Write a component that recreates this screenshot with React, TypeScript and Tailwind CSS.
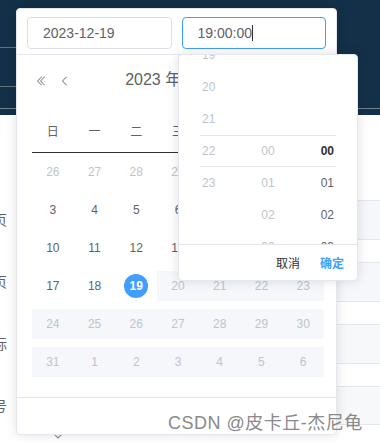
import React from "react";

type Cell = { n: number; kind: "prev" | "normal" | "sel" | "dis" };

const rows: Cell[][] = [
  [
    { n: 26, kind: "prev" },
    { n: 27, kind: "prev" },
    { n: 28, kind: "prev" },
    { n: 29, kind: "prev" },
    { n: 30, kind: "prev" },
    { n: 1, kind: "normal" },
    { n: 2, kind: "normal" },
  ],
  [3, 4, 5, 6, 7, 8, 9].map((n) => ({ n, kind: "normal" as const })),
  [10, 11, 12, 13, 14, 15, 16].map((n) => ({ n, kind: "normal" as const })),
  [
    { n: 17, kind: "normal" },
    { n: 18, kind: "normal" },
    { n: 19, kind: "sel" },
    { n: 20, kind: "dis" },
    { n: 21, kind: "dis" },
    { n: 22, kind: "dis" },
    { n: 23, kind: "dis" },
  ],
  [24, 25, 26, 27, 28, 29, 30].map((n) => ({ n, kind: "dis" as const })),
  [31, 1, 2, 3, 4, 5, 6].map((n) => ({ n, kind: "dis" as const })),
];

const weekdays = ["日", "一", "二", "三", "四", "五", "六"];

function DArrowLeft() {
  return (
    <svg viewBox="0 0 1024 1024" className="w-[12px] h-[12px]" fill="#606266">
      <path d="M529.408 149.376a29.12 29.12 0 0 1 41.728 0 30.592 30.592 0 0 1 0 42.688L259.264 511.936l311.872 319.936a30.592 30.592 0 0 1-.512 43.264 29.12 29.12 0 0 1-41.216-.512L197.76 534.272a32 32 0 0 1 0-44.672l331.648-340.224zm256 0a29.12 29.12 0 0 1 41.728 0 30.592 30.592 0 0 1 0 42.688L515.264 511.936l311.872 319.936a30.592 30.592 0 0 1-.512 43.264 29.12 29.12 0 0 1-41.216-.512L453.76 534.272a32 32 0 0 1 0-44.672l331.648-340.224z" />
    </svg>
  );
}

function ArrowLeft() {
  return (
    <svg viewBox="0 0 1024 1024" className="w-[12px] h-[12px]" fill="#606266">
      <path d="M609.408 149.376 277.76 489.6a32 32 0 0 0 0 44.672l331.648 340.352a29.12 29.12 0 0 0 41.728 0 30.592 30.592 0 0 0 0-42.752L339.264 511.936l311.872-319.872a30.592 30.592 0 0 0 0-42.688 29.12 29.12 0 0 0-41.728 0z" />
    </svg>
  );
}

function DateCell({ c }: { c: Cell }) {
  if (c.kind === "sel") {
    return (
      <div className="h-[38px] py-[4px]">
        <div className="h-[30px] flex items-center justify-center">
          <span className="w-[24px] h-[24px] rounded-full bg-[#409eff] text-white font-bold text-[12px] flex items-center justify-center">
            {c.n}
          </span>
        </div>
      </div>
    );
  }
  if (c.kind === "dis") {
    return (
      <div className="h-[38px] py-[4px]">
        <div className="h-[30px] bg-[#f5f7fa] flex items-center justify-center text-[12px] text-[#c0c4cc]">
          {c.n}
        </div>
      </div>
    );
  }
  return (
    <div className="h-[38px] py-[4px]">
      <div
        className={
          c.kind === "prev"
            ? "h-[30px] flex items-center justify-center text-[12px] text-[#c0c4cc]"
            : "h-[30px] flex items-center justify-center text-[12px] text-[#606266]"
        }
      >
        {c.n}
      </div>
    </div>
  );
}

export default function App() {
  return (
    <div className="relative w-[380px] h-[442px] overflow-hidden bg-white font-['Liberation_Sans','Noto_Sans_CJK_SC',sans-serif]">
      {/* page background */}
      <div className="flex flex-col h-full">
        <div className="h-[115px] shrink-0 bg-[#133048] flex flex-col">
          <div className="h-[47px]" />
          <div className="h-px w-[16px] bg-[#5f7284]" />
          <div className="h-[38px]" />
          <div className="h-px w-[16px] bg-[#5f7284]" />
          <div className="h-[21px]" />
          <div className="h-px w-full bg-[#6f8090]" />
        </div>
        <div className="flex flex-1">
          <div className="w-[10px] overflow-hidden flex flex-col pt-[95px] gap-[42px] text-[14px] leading-[20px] text-[#606266]">
            <span className="ml-[-7px]">页</span>
            <span className="ml-[-7px]">页</span>
            <span className="ml-[-7px]">标</span>
            <span className="ml-[-7px]">号</span>
          </div>
          <div className="flex-1 ml-[30px] pt-[85px] flex flex-col">
            <div className="h-[40px] border-y border-[#e4e7ed] bg-[#f5f7fa]" />
            <div className="h-[23px] border-b border-[#e4e7ed] bg-white" />
            <div className="h-[39px] border-b border-[#e4e7ed] bg-[#f5f7fa]" />
            <div className="h-[23px] border-b border-[#e4e7ed] bg-white" />
            <div className="h-[39px] border-b border-[#e4e7ed] bg-[#f7f8fa]" />
            <div className="h-[23px] border-b border-[#e4e7ed] bg-white" />
            <div className="h-[38px] border-b border-[#e4e7ed] bg-[#f7f8fa]" />
          </div>
        </div>
      </div>

      {/* chevron below panel */}
      <svg className="absolute left-[52px] top-[432px] w-[12px] h-[8px]" viewBox="0 0 12 8" fill="none" stroke="#909399" strokeWidth="1.2">
        <polyline points="1,1 6,6 11,1" />
      </svg>

      {/* date panel */}
      <div className="absolute left-[16px] top-[8px] w-[321px] h-[427px] bg-white border border-[#e4e7ed] rounded-[4px] shadow-[0_0_12px_rgba(0,0,0,0.12)] flex flex-col">
        <div className="pt-[8px] pb-[5px] px-[10px] flex gap-[10px] border-b border-[#e4e7ed]">
          <div className="w-[145px] h-[32px] border border-[#dcdfe6] rounded-[4px] flex items-center pl-[15px] text-[14px] text-[#606266]">
            2023-12-19
          </div>
          <div className="w-[145px] h-[32px] border border-[#409eff] rounded-[4px] flex items-center pl-[15px] text-[14px] text-[#606266]">
            19:00:00
            <span className="inline-block w-px h-[16px] bg-[#303133]" />
          </div>
        </div>
        <div className="h-[50px] flex items-center">
          <div className="w-[54px] flex items-center pl-[18px] gap-[12px] pt-[2px]">
            <DArrowLeft />
            <ArrowLeft />
          </div>
          <div className="flex-1 text-center text-[16px] text-[#606266] pr-[4px]">2023 年 12 月</div>
          <div className="w-[54px]" />
        </div>
        <div className="mt-[7px] ml-[15px] w-[292px]">
          <div className="h-[41px] grid grid-cols-7 items-center border-b border-[#303133] text-[12px] text-[#606266]">
            {weekdays.map((w) => (
              <div key={w} className="text-center">
                {w}
              </div>
            ))}
          </div>
          {rows.map((r, i) => (
            <div key={i} className="grid grid-cols-7">
              {r.map((c, j) => (
                <DateCell key={j} c={c} />
              ))}
            </div>
          ))}
        </div>
        <div className="mt-[16px] flex-1 border-t border-[#e4e7ed]" />
      </div>

      {/* time popup */}
      <div className="absolute left-[178px] top-[54px] w-[180px] h-[227px] bg-white border border-[#e4e7ed] rounded-[4px] shadow-[0_0_12px_rgba(0,0,0,0.12)] flex flex-col">
        <div className="relative h-[190px] overflow-hidden flex border-b border-[#e4e7ed]">
          <div className="absolute left-[21px] right-[21px] top-[80px] h-[32px] border-y border-[#e4e7ed]" />
          <div className="w-[60px] flex flex-col mt-[-16px] text-[12px] text-[#c0c4cc]">
            {["19", "20", "21", "22", "23"].map((h) => (
              <div key={h} className="h-[32px] leading-[32px] text-center shrink-0">
                {h}
              </div>
            ))}
          </div>
          <div className="w-[60px] flex flex-col pt-[80px] text-[12px] text-[#c0c4cc]">
            {["00", "01", "02", "03"].map((h) => (
              <div key={h} className="h-[32px] leading-[32px] text-center shrink-0">
                {h}
              </div>
            ))}
          </div>
          <div className="w-[60px] flex flex-col pt-[80px] text-[12px] text-[#606266]">
            <div className="h-[32px] leading-[32px] text-center shrink-0 font-bold text-[#303133]">00</div>
            {["01", "02", "03"].map((h) => (
              <div key={h} className="h-[32px] leading-[32px] text-center shrink-0">
                {h}
              </div>
            ))}
          </div>
        </div>
        <div className="flex-1 flex items-center justify-end gap-[20px] pr-[13px] pt-[2px] text-[12px]">
          <span className="text-[#303133]">取消</span>
          <span className="text-[#409eff] font-bold">确定</span>
        </div>
      </div>

      {/* watermark */}
      <div className="absolute left-[168px] top-[410px] text-[18px] leading-[26px] tracking-[0.5px] text-[#8a8a8a] whitespace-nowrap">
        CSDN @皮卡丘-杰尼龟
      </div>
    </div>
  );
}
